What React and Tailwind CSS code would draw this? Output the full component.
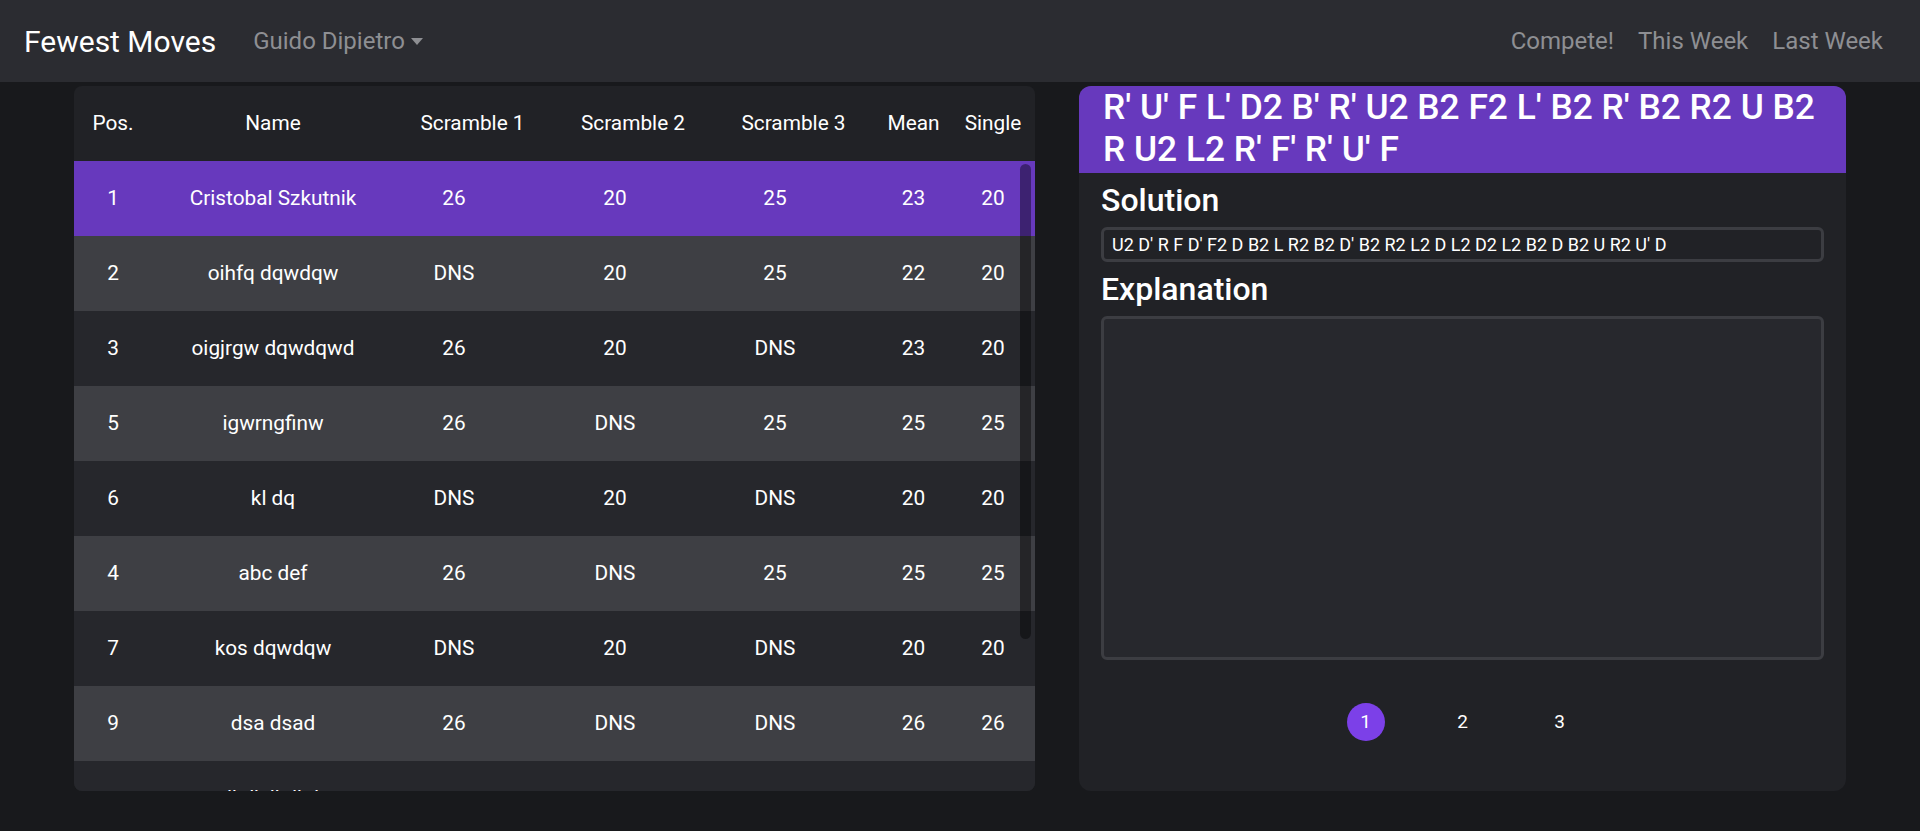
import React from "react";

const headCols = [
  { label: "Pos.", w: "w-[78px]" },
  { label: "Name", w: "w-[242px]" },
  { label: "Scramble 1", w: "w-[157px]" },
  { label: "Scramble 2", w: "w-[164px]" },
  { label: "Scramble 3", w: "w-[157px]" },
  { label: "Mean", w: "w-[83px]" },
  { label: "Single", w: "w-[76px]" },
];

const bodyCols = ["w-[78px]", "w-[242px]", "w-[120px]", "w-[202px]", "w-[118px]", "w-[71px] ml-[44px]", "w-[88px]"];

const results = [
  ["1", "Cristobal Szkutnik", "26", "20", "25", "23", "20"],
  ["2", "oihfq dqwdqw", "DNS", "20", "25", "22", "20"],
  ["3", "oigjrgw dqwdqwd", "26", "20", "DNS", "23", "20"],
  ["5", "igwrngfinw", "26", "DNS", "25", "25", "25"],
  ["6", "kl dq", "DNS", "20", "DNS", "20", "20"],
  ["4", "abc def", "26", "DNS", "25", "25", "25"],
  ["7", "kos dqwdqw", "DNS", "20", "DNS", "20", "20"],
  ["9", "dsa dsad", "26", "DNS", "DNS", "26", "26"],
  ["", "lkdk lkdkd", "", "", "", "", ""],
];

function rowBg(idx) {
  if (idx === 0) return "bg-[#6739bd]";
  return idx % 2 === 1 ? "bg-[#3e3f44]" : "bg-[#26272c]";
}

function Leaderboard() {
  return (
    <section className="relative w-[961px] shrink-0 rounded-lg bg-[#212226] overflow-hidden text-[20.8px]">
      <div className="flex h-[75px] items-center">
        {headCols.map((c) => (
          <div key={c.label} className={`${c.w} shrink-0 text-center`}>
            {c.label}
          </div>
        ))}
      </div>
      {results.map((r, idx) => (
        <div key={idx} className={`flex h-[75px] items-center ${rowBg(idx)}`}>
          {r.map((cell, i) => (
            <div key={i} className={`${bodyCols[i]} shrink-0 text-center whitespace-nowrap`}>
              {cell}
            </div>
          ))}
        </div>
      ))}
      {/* scrollbar thumb */}
      <div className="absolute left-[946px] top-[78px] w-[11px] h-[475px] rounded-full bg-black/40" />
    </section>
  );
}

function ScramblePanel() {
  return (
    <section className="flex-1 rounded-xl bg-[#212226] overflow-hidden flex flex-col">
      <div className="bg-[#6739bd] px-6 pb-[3px]">
        <h2 className="text-[35.3px] font-medium leading-[42px]">
          R' U' F L' D2 B' R' U2 B2 F2 L' B2 R' B2 R2 U B2 R U2 L2 R' F' R' U' F
        </h2>
      </div>
      <div className="px-[22px] pt-2 flex flex-col">
        <h3 className="text-[32px] font-medium leading-[38px]">Solution</h3>
        <div className="mt-2 h-[35px] rounded-md border-[3px] border-[#3c3d42] px-2 flex items-center text-[18px]">
          U2 D' R F D' F2 D B2 L R2 B2 D' B2 R2 L2 D L2 D2 L2 B2 D B2 U R2 U' D
        </div>
        <h3 className="mt-2 text-[32px] font-medium leading-[38px]">Explanation</h3>
        <div className="mt-2 h-[344px] rounded-md border-[3px] border-[#3c3d42] bg-[#27282d]" />
        <div className="mt-[43px] flex justify-center gap-[59px] text-[19px]">
          <button className="w-[38px] h-[38px] rounded-full bg-[#7c40e8] flex items-center justify-center">1</button>
          <button className="w-[38px] h-[38px] flex items-center justify-center">2</button>
          <button className="w-[38px] h-[38px] flex items-center justify-center">3</button>
        </div>
      </div>
    </section>
  );
}

export default function App() {
  return (
    <div className="h-[831px] bg-[#18191c] text-white font-['Roboto',sans-serif] flex flex-col">
      <nav className="h-[82px] shrink-0 bg-[#2b2c31] flex items-center pl-6 pr-[37px]">
        <span className="text-[30px]">Fewest Moves</span>
        <button className="ml-[37px] text-[24px] text-[#8e8f93] flex items-center">
          Guido Dipietro
          <span className="ml-[6px] border-t-[7px] border-x-[6px] border-x-transparent border-t-[#8e8f93]" />
        </button>
        <div className="ml-auto flex gap-6 text-[24px] text-[#8e8f93]">
          <a>Compete!</a>
          <a>This Week</a>
          <a>Last Week</a>
        </div>
      </nav>
      <main className="flex gap-[44px] px-[74px] pt-1 h-[709px]">
        <Leaderboard />
        <ScramblePanel />
      </main>
    </div>
  );
}
